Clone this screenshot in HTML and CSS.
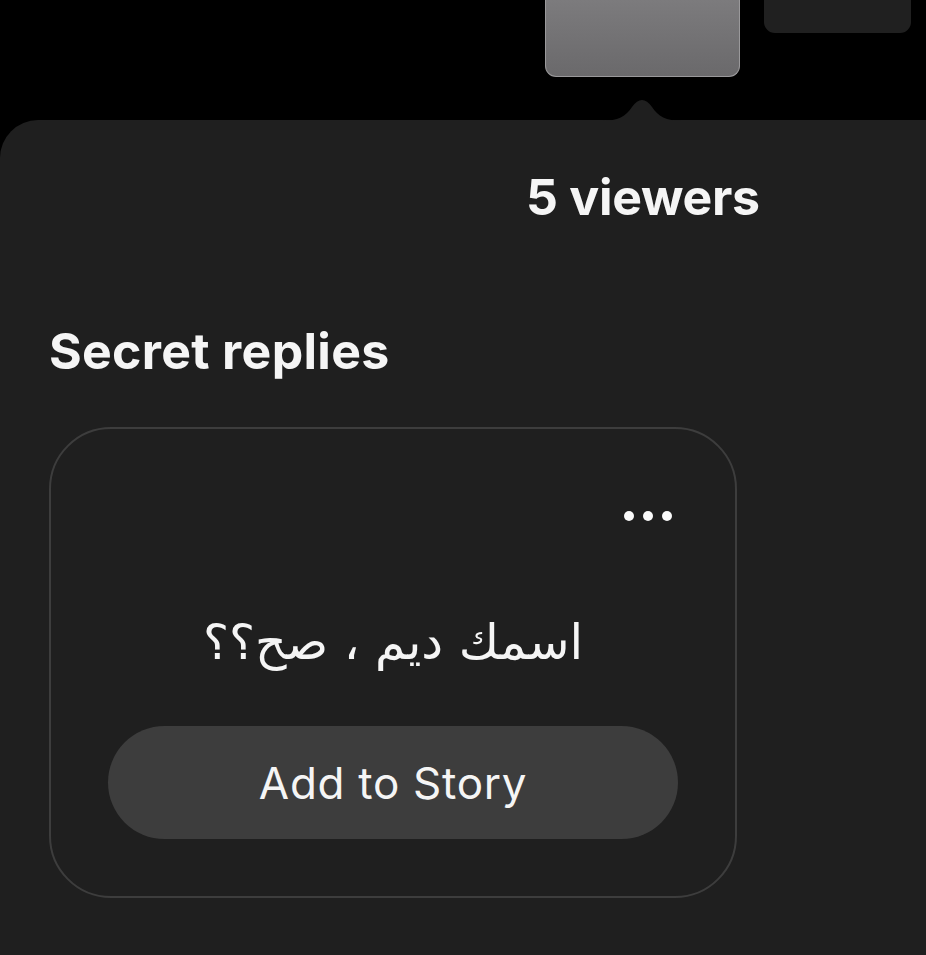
FILE: index.html
```html
<!DOCTYPE html>
<html lang="en">
<head>
<meta charset="utf-8">
<title>Secret replies</title>
<link rel="stylesheet" href="styles.css">
</head>
<body>
<div class="screen">
  <div class="thumbs">
    <div class="thumb thumb-active"></div>
    <div class="thumb thumb-next"></div>
  </div>
  <section class="panel">
    <svg class="notch" width="80" height="25" viewBox="0 0 80 25" aria-hidden="true">
      <path d="M0 25 C16 25 24 20 30 11 Q40 -3 50 11 C56 20 64 25 80 25 Z" fill="#1f1f1f"/>
    </svg>
    <div class="viewers-row">
      <h2 class="viewers">5 viewers</h2>
    </div>
    <h1 class="section-title">Secret replies</h1>
    <div class="card">
      <div class="menu-row">
        <span class="dot"></span><span class="dot"></span><span class="dot"></span>
      </div>
      <p class="reply" dir="rtl" lang="ar">اسمك ديم ، صح؟؟</p>
      <button class="add-btn">Add to Story</button>
    </div>
  </section>
</div>
</body>
</html>
```
FILE: styles.css
```css
* { box-sizing: border-box; }
html, body {
  margin: 0;
  padding: 0;
  background: #000;
  height: 100%;
}
body {
  font-family: Inter, "Noto Sans", "DejaVu Sans", sans-serif;
  color: #f5f5f5;
  overflow: hidden;
}
.screen {
  display: flex;
  flex-direction: column;
  height: 955px;
}
.thumbs {
  height: 120px;
  display: flex;
  align-items: flex-start;
  gap: 24px;
  padding-left: 545px;
  flex-shrink: 0;
}
.thumb {
  border-radius: 0 0 11px 11px;
}
.thumb-active {
  width: 195px;
  height: 77px;
  background: linear-gradient(#7c7b7d, #6a696b);
  border: 1px solid #9a999b;
  border-top: none;
}
.thumb-next {
  width: 147px;
  height: 33px;
  background: #202020;
}
.panel {
  position: relative;
  flex: 1;
  background: #1f1f1f;
  border-top-left-radius: 38px;
  padding: 52px 0 0 49px;
}
.notch {
  position: absolute;
  top: -24px;
  left: 602px;
  display: block;
}
.viewers-row {
  display: flex;
  padding-left: 477px;
}
.viewers, .section-title {
  margin: 0;
  font-size: 50px;
  line-height: 50px;
  font-weight: 700;
}
.viewers {
  letter-spacing: -0.3px;
}
.section-title {
  margin-top: 104px;
  letter-spacing: 0.3px;
}
.card {
  margin-top: 51px;
  width: 688px;
  height: 471px;
  border: 2px solid #3d3d3d;
  border-radius: 62px;
  padding: 0 57px;
  display: flex;
  flex-direction: column;
  align-items: stretch;
}
.menu-row {
  display: flex;
  justify-content: flex-end;
  gap: 9px;
  padding-right: 6px;
  margin-top: 82px;
}
.dot {
  width: 10px;
  height: 10px;
  border-radius: 50%;
  background: #fafafa;
}
.reply {
  margin: 0;
  margin-top: 92px;
  text-align: center;
  font-family: "DejaVu Sans", sans-serif;
  font-size: 49px;
  line-height: 60px;
  color: #f5f5f5;
}
.add-btn {
  margin-top: 53px;
  height: 113px;
  border: none;
  border-radius: 57px;
  background: #3d3d3d;
  color: #f5f5f5;
  font-family: Inter, "Noto Sans", sans-serif;
  font-size: 44px;
  font-weight: 400;
  letter-spacing: 0.7px;
  padding: 0;
}
```
